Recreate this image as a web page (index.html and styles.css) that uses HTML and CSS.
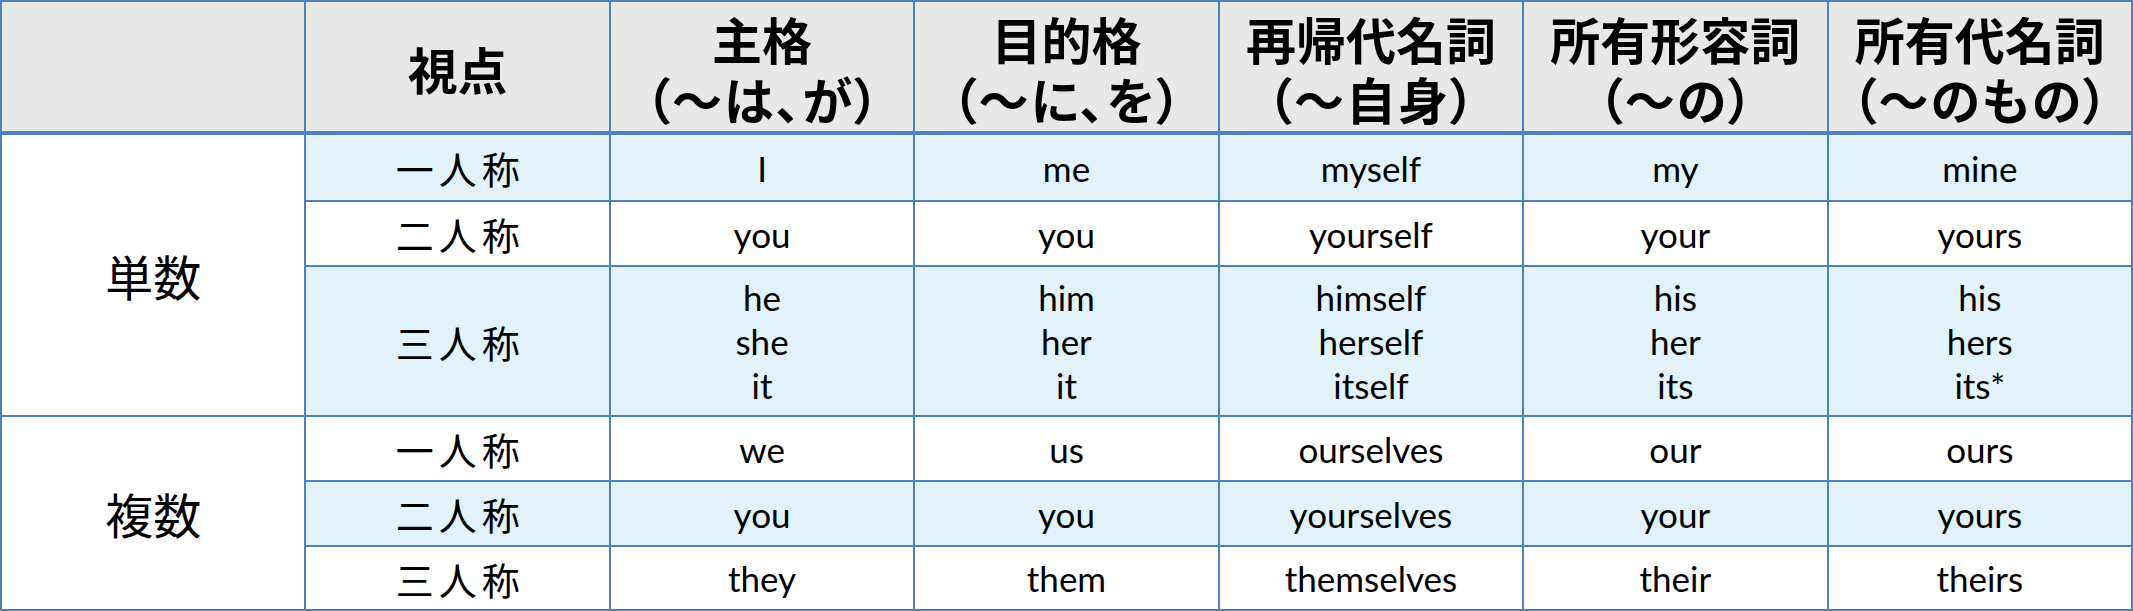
FILE: index.html
```html
<!DOCTYPE html>
<html lang="ja">
<head>
<meta charset="utf-8">
<title>人称代名詞</title>
<link rel="stylesheet" href="styles.css">
</head>
<body>
<div class="grid">
  <div class="cell head"></div>
  <div class="cell head">視点</div>
  <div class="cell head"><span class="l1">主格</span><span class="l2">（～は、が）</span></div>
  <div class="cell head"><span class="l1">目的格</span><span class="l2">（～に、を）</span></div>
  <div class="cell head"><span class="l1">再帰代名詞</span><span class="l2">（～自身）</span></div>
  <div class="cell head"><span class="l1">所有形容詞</span><span class="l2">（～の）</span></div>
  <div class="cell head"><span class="l1">所有代名詞</span><span class="l2">（～のもの）</span></div>

  <div class="cell group g1">単数</div>
  <div class="cell person blue">一人称</div>
  <div class="cell word blue">I</div>
  <div class="cell word blue">me</div>
  <div class="cell word blue">myself</div>
  <div class="cell word blue">my</div>
  <div class="cell word blue">mine</div>

  <div class="cell person">二人称</div>
  <div class="cell word">you</div>
  <div class="cell word">you</div>
  <div class="cell word">yourself</div>
  <div class="cell word">your</div>
  <div class="cell word">yours</div>

  <div class="cell person blue">三人称</div>
  <div class="cell word blue">he<br>she<br>it</div>
  <div class="cell word blue">him<br>her<br>it</div>
  <div class="cell word blue">himself<br>herself<br>itself</div>
  <div class="cell word blue">his<br>her<br>its</div>
  <div class="cell word blue">his<br>hers<br>its*</div>

  <div class="cell group g2">複数</div>
  <div class="cell person">一人称</div>
  <div class="cell word">we</div>
  <div class="cell word">us</div>
  <div class="cell word">ourselves</div>
  <div class="cell word">our</div>
  <div class="cell word">ours</div>

  <div class="cell person blue">二人称</div>
  <div class="cell word blue">you</div>
  <div class="cell word blue">you</div>
  <div class="cell word blue">yourselves</div>
  <div class="cell word blue">your</div>
  <div class="cell word blue">yours</div>

  <div class="cell person">三人称</div>
  <div class="cell word">they</div>
  <div class="cell word">them</div>
  <div class="cell word">themselves</div>
  <div class="cell word">their</div>
  <div class="cell word">theirs</div>
</div>
</body>
</html>
```

FILE: styles.css
```css
html, body {
  margin: 0;
  padding: 0;
  background: #ffffff;
}

.grid {
  box-sizing: border-box;
  width: 2133px;
  height: 611px;
  display: grid;
  grid-template-columns: repeat(7, 1fr);
  grid-template-rows: 133px 67px 65px 150px 65px 65px 64px;
  border-top: 2px solid #4f81bd;
  border-left: 2px solid #4f81bd;
  color: #000000;
}

.cell {
  box-sizing: border-box;
  border-right: 2px solid #4f81bd;
  border-bottom: 2px solid #4f81bd;
  display: flex;
  flex-direction: column;
  align-items: center;
  justify-content: center;
  text-align: center;
  background: #ffffff;
}

.head {
  background: #e8e8e8;
  border-bottom-width: 4px;
  font-family: "Noto Sans CJK JP", sans-serif;
  font-weight: 700;
  font-size: 50px;
  line-height: 60px;
  padding-top: 2px;
}

.l1,
.l2 {
  display: block;
  white-space: nowrap;
}

.l2 {
  font-feature-settings: "palt";
  letter-spacing: 2px;
  text-indent: 2px;
}

.blue {
  background: #e1f2fb;
}

.group {
  font-family: "Noto Sans CJK JP", sans-serif;
  font-size: 48px;
  font-weight: 400;
}

.g1 {
  grid-column: 1;
  grid-row: 2 / span 3;
}

.g2 {
  grid-column: 1;
  grid-row: 5 / span 3;
}

.person {
  font-family: "Noto Sans CJK JP", sans-serif;
  font-size: 38px;
  font-weight: 400;
  letter-spacing: 5px;
  text-indent: 5px;
}

.word {
  font-family: Lato, "Open Sans", sans-serif;
  font-size: 35px;
  line-height: 44px;
}
```
